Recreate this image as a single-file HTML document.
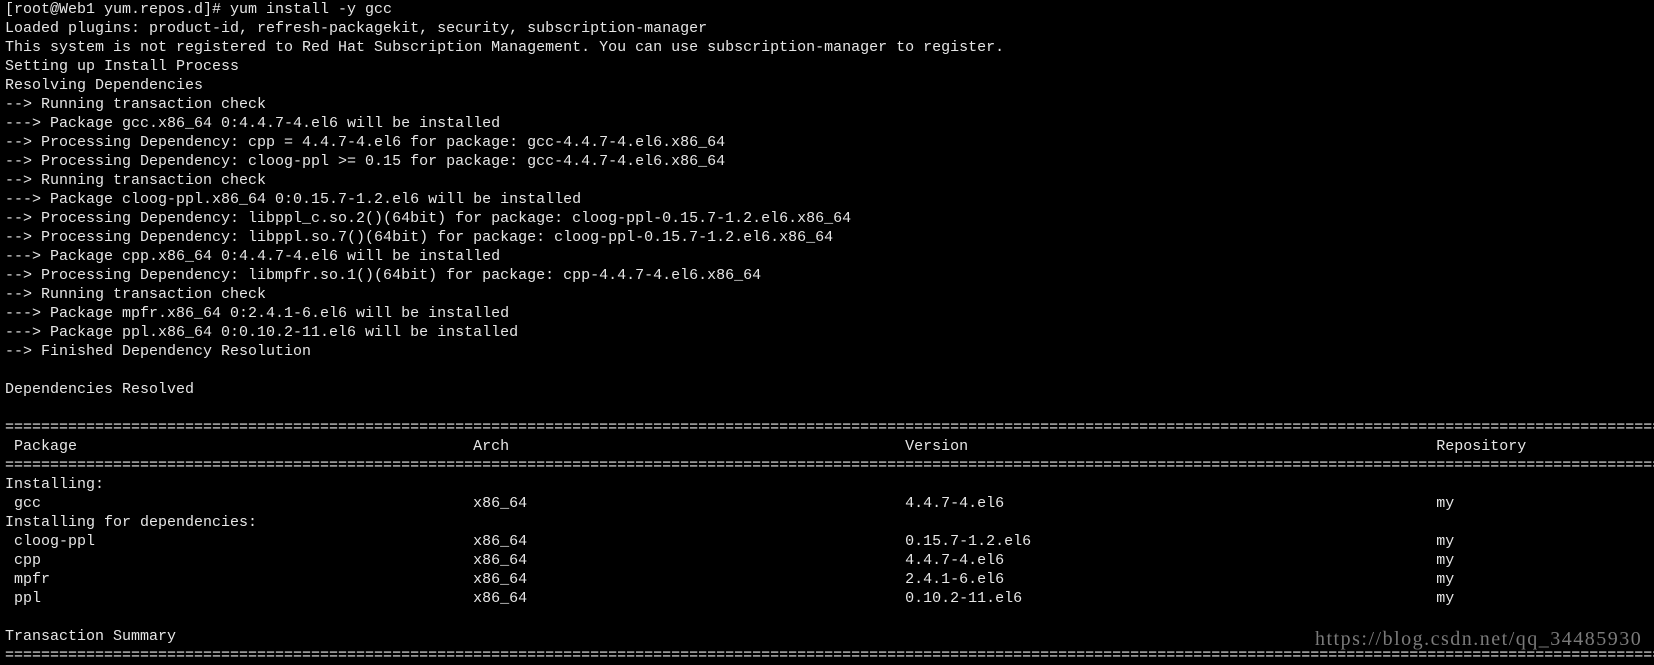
<!DOCTYPE html>
<html><head><meta charset="utf-8"><style>
html,body{margin:0;padding:0;background:#000;width:1654px;height:660px;overflow:hidden}
pre{margin:0;position:absolute;left:5px;top:0;font-family:"Liberation Mono",monospace;font-size:15px;line-height:19px;color:#e6e6e6;white-space:pre}
.wm{position:absolute;left:1315px;top:628px;font-family:"Liberation Serif",serif;font-size:20px;color:#7a7a7a;letter-spacing:1.5px}
</style></head><body>
<pre>[root@Web1 yum.repos.d]# yum install -y gcc
Loaded plugins: product-id, refresh-packagekit, security, subscription-manager
This system is not registered to Red Hat Subscription Management. You can use subscription-manager to register.
Setting up Install Process
Resolving Dependencies
--> Running transaction check
---> Package gcc.x86_64 0:4.4.7-4.el6 will be installed
--> Processing Dependency: cpp = 4.4.7-4.el6 for package: gcc-4.4.7-4.el6.x86_64
--> Processing Dependency: cloog-ppl >= 0.15 for package: gcc-4.4.7-4.el6.x86_64
--> Running transaction check
---> Package cloog-ppl.x86_64 0:0.15.7-1.2.el6 will be installed
--> Processing Dependency: libppl_c.so.2()(64bit) for package: cloog-ppl-0.15.7-1.2.el6.x86_64
--> Processing Dependency: libppl.so.7()(64bit) for package: cloog-ppl-0.15.7-1.2.el6.x86_64
---> Package cpp.x86_64 0:4.4.7-4.el6 will be installed
--> Processing Dependency: libmpfr.so.1()(64bit) for package: cpp-4.4.7-4.el6.x86_64
--> Running transaction check
---> Package mpfr.x86_64 0:2.4.1-6.el6 will be installed
---> Package ppl.x86_64 0:0.10.2-11.el6 will be installed
--> Finished Dependency Resolution

Dependencies Resolved

=========================================================================================================================================================================================
 Package                                            Arch                                            Version                                                    Repository
=========================================================================================================================================================================================
Installing:
 gcc                                                x86_64                                          4.4.7-4.el6                                                my
Installing for dependencies:
 cloog-ppl                                          x86_64                                          0.15.7-1.2.el6                                             my
 cpp                                                x86_64                                          4.4.7-4.el6                                                my
 mpfr                                               x86_64                                          2.4.1-6.el6                                                my
 ppl                                                x86_64                                          0.10.2-11.el6                                              my

Transaction Summary
=========================================================================================================================================================================================</pre>
<div class="wm">https://blog.csdn.net/qq_34485930</div>
</body></html>
